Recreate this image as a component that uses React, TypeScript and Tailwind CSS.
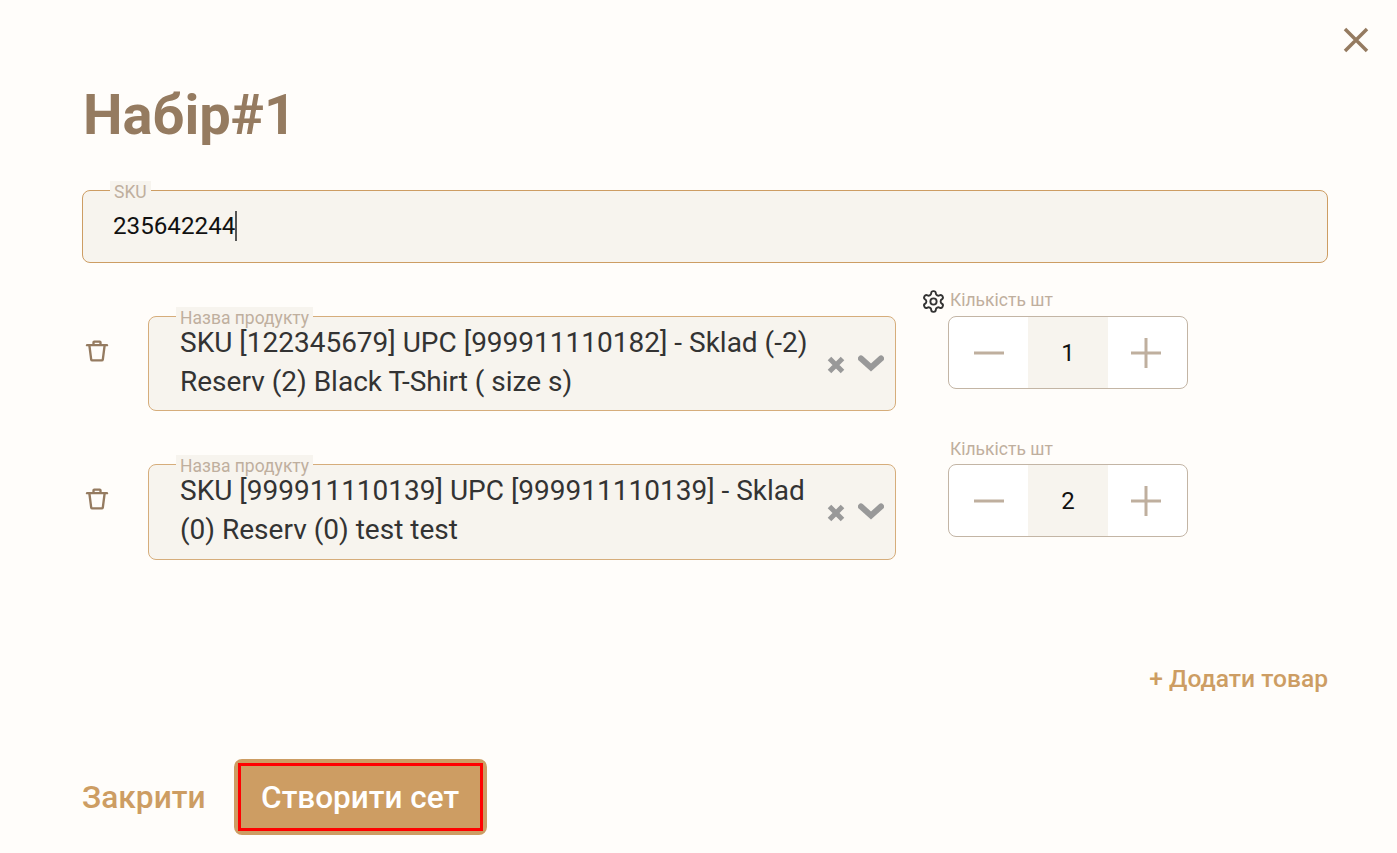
import React from "react";

const Trash = () => (
  <svg width="28" height="28" viewBox="0 0 24 24" fill="none" stroke="#957B60" strokeWidth="2" strokeLinecap="round" strokeLinejoin="round">
    <path d="M3.500 7h17" />
    <path d="M9 6.500V4.600c0-.4.3-.6.6-.6h4.800c.3 0 .6.2.6.6v1.900" />
    <path d="M5.500 7.500 7 19.200c.1.5.5.8 1 .8h8c.5 0 .9-.3 1-.8l1.500-11.700" />
  </svg>
);

const Gear = () => (
  <svg width="25" height="25" viewBox="0 0 24 24" fill="none" stroke="#333333" strokeWidth="1.800" strokeLinecap="round" strokeLinejoin="round">
    <path d="M12.220 2h-.44a2 2 0 0 0-2 2v.180a2 2 0 0 1-1 1.730l-.43.250a2 2 0 0 1-2 0l-.150-.080a2 2 0 0 0-2.730.730l-.220.380a2 2 0 0 0 .730 2.730l.150.100a2 2 0 0 1 1 1.720v.510a2 2 0 0 1-1 1.740l-.150.090a2 2 0 0 0-.730 2.730l.220.380a2 2 0 0 0 2.730.730l.150-.080a2 2 0 0 1 2 0l.430.250a2 2 0 0 1 1 1.730V20a2 2 0 0 0 2 2h.440a2 2 0 0 0 2-2v-.180a2 2 0 0 1 1-1.730l.430-.250a2 2 0 0 1 2 0l.150.080a2 2 0 0 0 2.730-.730l.220-.390a2 2 0 0 0-.730-2.730l-.150-.080a2 2 0 0 1-1-1.740v-.500a2 2 0 0 1 1-1.740l.150-.090a2 2 0 0 0 .730-2.730l-.220-.380a2 2 0 0 0-2.730-.730l-.150.080a2 2 0 0 1-2 0l-.430-.250a2 2 0 0 1-1-1.730V4a2 2 0 0 0-2-2z" />
    <circle cx="12" cy="12" r="3" />
  </svg>
);

const Row = ({ line1, line2, qty, gear }: { line1: string; line2: string; qty: string; gear?: boolean }) => (
  <div className="flex items-start">
    <div className="w-[66px] pt-[21px] pl-[1px] shrink-0">
      <Trash />
    </div>
    <div className={`relative w-[748px] shrink-0 rounded-lg border border-[#D6AD7B] bg-[#F7F4EE] pl-[31px] pt-[6px] ${gear ? "h-[95px]" : "h-[96px]"}`}>
      <span className="absolute left-[27px] top-[-10px] bg-[#F7F4EE] px-[4px] pt-[1px] text-[17.5px] leading-[20px] text-[#BFAF9E]">Назва продукту</span>
      <div className="text-[28px] leading-[39px] text-[#333333] whitespace-nowrap">{line1}</div>
      <div className="text-[28px] leading-[39px] text-[#333333] whitespace-nowrap">{line2}</div>
      <svg className="absolute left-[678px] top-[39px]" width="18" height="18" viewBox="0 0 18 18" fill="none" stroke="#999999" strokeWidth="5">
        <path d="M2.500 2.500 15.500 15.500M15.500 2.500 2.500 15.500" />
      </svg>
      <svg className="absolute left-[709px] top-[38px]" width="26" height="18" viewBox="0 0 26 18" fill="none" stroke="#999999" strokeWidth="6" strokeLinecap="round" strokeLinejoin="miter">
        <path d="M3 3.500 13 12.500 23 3.500" />
      </svg>
    </div>
    <div className="relative ml-[52px] w-[239.5px] shrink-0">
      {gear && (
        <div className="absolute left-[-27px] top-[-27px]">
          <Gear />
        </div>
      )}
      <span className={`absolute left-[2px] text-[17.5px] leading-[20px] text-[#BFAF9E] whitespace-nowrap ${gear ? "top-[-26px]" : "top-[-25px]"}`}>Кількість шт</span>
      <div className="flex h-[73px] overflow-hidden rounded-lg border border-[#C3B5A5] bg-white">
        <div className="flex w-[79px] items-center justify-center">
          <svg width="30" height="30" viewBox="0 0 30 30" stroke="#BFAF9E" strokeWidth="3">
            <path d="M0 15h30" />
          </svg>
        </div>
        <div className="flex w-[80px] items-center justify-center bg-[#F7F4EE] text-[24px] text-[#111111]">{qty}</div>
        <div className="flex w-[78.5px] items-center justify-center">
          <svg className="ml-[-2px]" width="30" height="30" viewBox="0 0 30 30" stroke="#BFAF9E" strokeWidth="3">
            <path d="M0 15h30M15 0v30" />
          </svg>
        </div>
      </div>
    </div>
  </div>
);

export default function App() {
  return (
    <div
      className="flex h-[853px] w-full flex-col overflow-hidden bg-[#FFFDFA] pl-[82px] pr-[69px]"
      style={{ fontFamily: "Roboto, sans-serif" }}
    >
      <div className="relative">
        <svg className="absolute left-[1259px] top-[25px]" width="30" height="30" viewBox="0 0 30 30" stroke="#957B60" strokeWidth="3.500" fill="none">
          <path d="M4 4 26 26M26 4 4 26" />
        </svg>
      </div>
      <h1 className="mt-[82px] pl-[1px] text-[56px] font-bold leading-[66px] text-[#957B60]">Набір#1</h1>
      <div className="relative mt-[42px] h-[73px] rounded-lg border border-[#CD9D63] bg-[#F7F4EE] pl-[30px] pt-[18px]">
        <span className="absolute left-[27px] top-[-10px] bg-[#F7F4EE] px-[4px] pt-[1px] text-[17.5px] leading-[20px] text-[#BFAF9E]">SKU</span>
        <div className="flex h-[34px] items-center text-[24.2px] text-[#111111]">
          <span>235642244</span>
          <span className="h-[30px] w-[2px] bg-[#555555]" />
        </div>
      </div>
      <div className="mt-[53px] flex flex-col gap-[53px]">
        <Row line1="SKU [122345679] UPC [999911110182] - Sklad (-2)" line2="Reserv (2) Black T-Shirt ( size s)" qty="1" gear />
        <Row line1="SKU [999911110139] UPC [999911110139] - Sklad" line2="(0) Reserv (0) test test" qty="2" />
      </div>
      <div className="mt-[103px] text-right text-[24.6px] font-medium leading-[32px] text-[#CD9D63]">+ Додати товар</div>
      <div className="mt-[64px] flex items-center">
        <span className="pt-[1px] text-[31.700px] font-medium leading-[38px] text-[#CD9D63]">Закрити</span>
        <div className="ml-[28px] rounded-lg border-[4px] border-[#CD9D63]">
          <button className="flex h-[68px] w-[245px] items-center justify-center border-[3px] border-[#FF0000] bg-[#CD9D63] pt-[1px] text-[31.500px] font-medium text-white">
            Створити сет
          </button>
        </div>
      </div>
    </div>
  );
}
